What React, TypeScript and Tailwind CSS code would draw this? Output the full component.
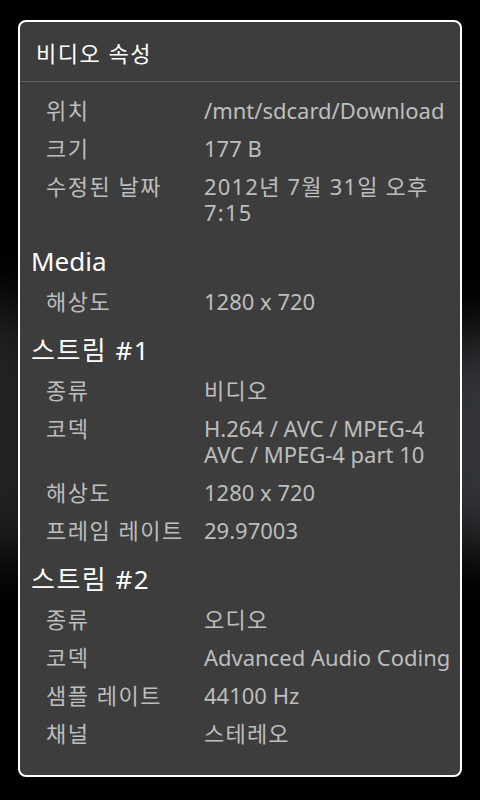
type Row = { label: string; value: string; wide?: boolean };
type Section = { title?: string; hangul?: boolean; rows: Row[] };

const sections: Section[] = [
  {
    rows: [
      { label: '위치', value: '/mnt/sdcard/Download' },
      { label: '크기', value: '177 B' },
      { label: '수정된 날짜', value: '2012년 7월 31일 오후 7:15', wide: true },
    ],
  },
  {
    title: 'Media',
    rows: [{ label: '해상도', value: '1280 x 720' }],
  },
  {
    title: '스트림 #1',
    hangul: true,
    rows: [
      { label: '종류', value: '비디오', wide: true },
      { label: '코덱', value: 'H.264 / AVC / MPEG-4 AVC / MPEG-4 part 10' },
      { label: '해상도', value: '1280 x 720' },
      { label: '프레임 레이트', value: '29.97003' },
    ],
  },
  {
    title: '스트림 #2',
    hangul: true,
    rows: [
      { label: '종류', value: '오디오', wide: true },
      { label: '코덱', value: 'Advanced Audio Coding' },
      { label: '샘플 레이트', value: '44100 Hz' },
      { label: '채널', value: '스테레오', wide: true },
    ],
  },
];

function InfoRow({ row }: { row: Row }) {
  return (
    <div className="grid grid-cols-[158px_1fr] py-[6px] pl-[26px] pr-[4px] text-[22px] leading-[26px] text-[#bebebe]">
      <span className="whitespace-nowrap tracking-[1.5px]">{row.label}</span>
      <span className={row.wide ? 'tracking-[1.2px]' : ''}>{row.value}</span>
    </div>
  );
}

export default function App() {
  return (
    <div
      className="relative h-[800px] w-[480px] overflow-hidden bg-black"
      style={{ fontFamily: '"Noto Sans", "Noto Sans CJK KR", sans-serif' }}
    >
      {/* faint smoky wallpaper behind the dialog */}
      <div className="absolute left-[-60px] top-[300px] h-[260px] w-[120px] rounded-full bg-[#3a3a3a] opacity-60 blur-[30px]" />
      <div className="absolute right-[-60px] top-[330px] h-[220px] w-[120px] rounded-full bg-[#4a4d52] opacity-70 blur-[30px]" />

      <div className="relative mx-[18px] mt-[20px] h-[757px] rounded-[8px] border-2 border-white bg-[#3d3d3d]">
        <div className="flex h-[60px] items-center border-b border-[#5e5e5e] pl-[16px] pt-[3px] text-[22px] tracking-[1.5px] text-white">
          비디오 속성
        </div>
        <div className="pt-[9px]">
          {sections.map((s, i) => (
            <div key={i}>
              {s.title && (
                <div
                  className={
                    'pl-[11px] pt-[15px] pb-[6px] text-[26px] leading-[30px] text-white' +
                    (s.hangul ? ' tracking-[1.5px]' : '')
                  }
                >
                  {s.title}
                </div>
              )}
              {s.rows.map((r, j) => (
                <InfoRow key={j} row={r} />
              ))}
            </div>
          ))}
        </div>
      </div>
    </div>
  );
}
